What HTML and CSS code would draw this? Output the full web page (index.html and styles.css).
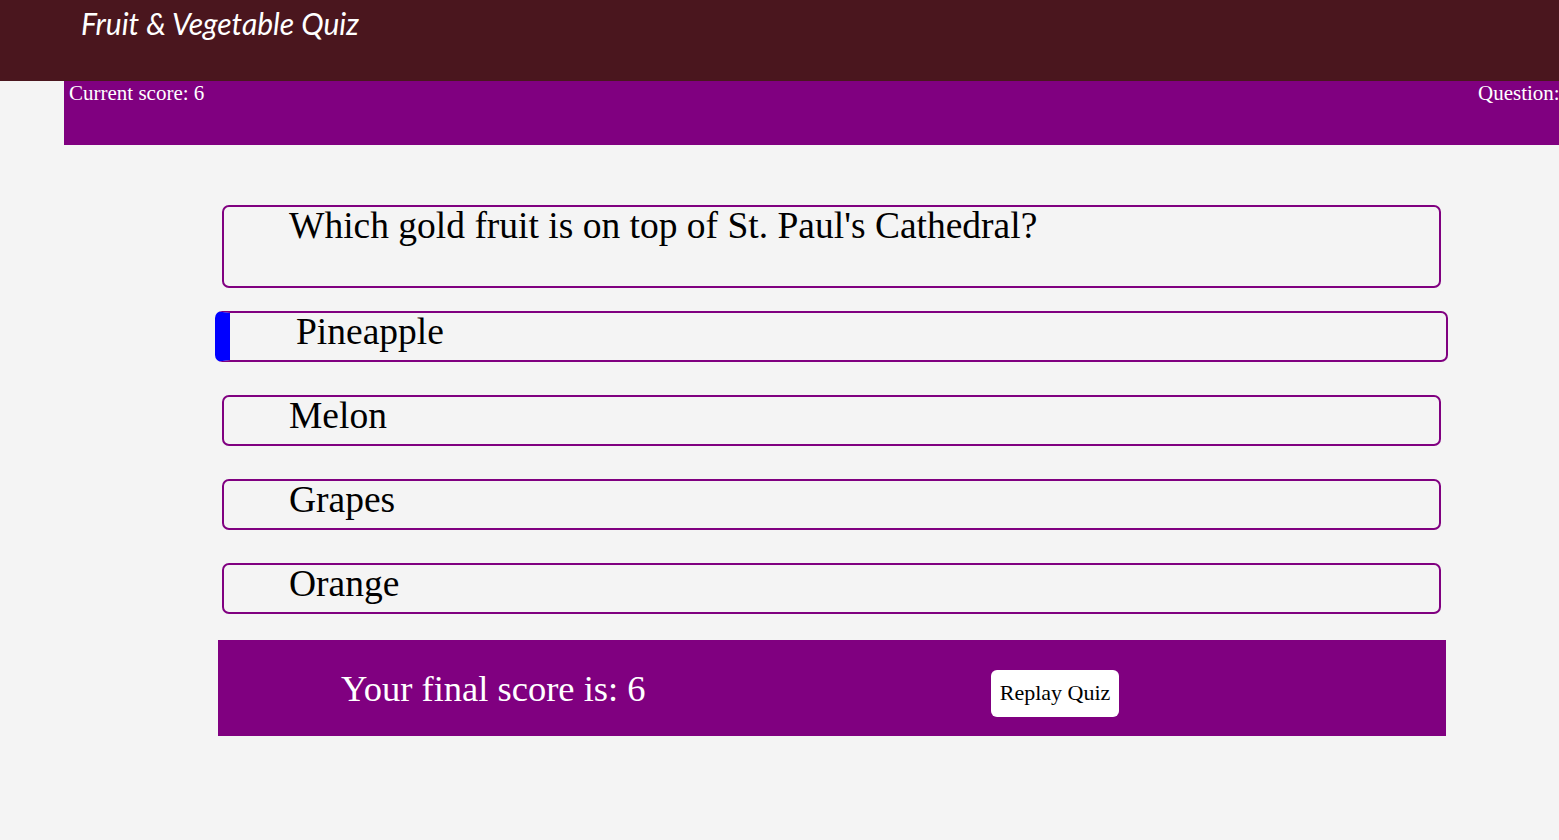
FILE: index.html
```html
<!DOCTYPE html>
<html lang="en">
<head>
<meta charset="utf-8">
<title>Fruit &amp; Vegetable Quiz</title>
<link rel="stylesheet" href="styles.css">
</head>
<body>
<header class="site-header">
  <h1 class="site-title">Fruit &amp; Vegetable Quiz</h1>
</header>
<div class="score-bar">
  <span class="score">Current score: 6</span>
  <span class="question-count">Question: 10/10</span>
</div>
<main class="quiz">
  <div class="question-box">Which gold fruit is on top of St. Paul's Cathedral?</div>
  <div class="answer selected">Pineapple</div>
  <div class="answer">Melon</div>
  <div class="answer">Grapes</div>
  <div class="answer">Orange</div>
  <section class="result">
    <p class="final-score">Your final score is: 6</p>
    <button class="replay">Replay Quiz</button>
  </section>
</main>
</body>
</html>
```
FILE: styles.css
```css
html, body {
  margin: 0;
  padding: 0;
}
body {
  background: #f4f4f4;
  overflow: hidden;
  width: 1559px;
  height: 840px;
  font-family: "Liberation Serif", "DejaVu Serif", serif;
}
.site-header {
  background: #4a161e;
  height: 81px;
  padding-left: 81px;
  box-sizing: border-box;
}
.site-title {
  margin: 0;
  padding-top: 4px;
  color: #ffffff;
  font-family: Lato, "DejaVu Sans", sans-serif;
  font-style: italic;
  font-weight: normal;
  font-size: 30px;
  line-height: 38px;
}
.score-bar {
  background: #800080;
  height: 64px;
  margin-left: 64px;
  width: 1560px;
  box-sizing: border-box;
  padding: 0 0 0 5px;
  display: flex;
  justify-content: space-between;
  color: #ffffff;
  font-family: "Liberation Serif", serif;
  font-size: 21px;
  line-height: 24px;
}
.question-count {
  width: 146px;
  white-space: nowrap;
}
.quiz {
  width: 1219px;
  margin: 60px 0 0 222px;
  display: flex;
  flex-direction: column;
}
.question-box {
  border: 2px solid #800080;
  border-radius: 7px;
  height: 83px;
  box-sizing: border-box;
  padding: 0 0 0 65px;
  font-size: 37.5px;
  line-height: 38px;
  color: #000;
}
.answer {
  margin-top: 23px;
  border: 2px solid #800080;
  border-radius: 7px;
  height: 51px;
  box-sizing: border-box;
  padding: 0 0 0 65px;
  font-size: 37.5px;
  line-height: 38px;
  color: #000;
}
.answer.selected {
  margin-left: -7px;
  margin-right: -7px;
  border-left: 15px solid #0000ff;
  padding-left: 66px;
}
.answer + .answer {
  margin-top: 33px;
}
.result {
  margin: 26px -5px 0 -4px;
  height: 96px;
  background: #800080;
  display: flex;
  align-items: center;
  padding-left: 123px;
  box-sizing: border-box;
}
.final-score {
  margin: 0;
  color: #ffffff;
  font-size: 36.5px;
  width: 650px;
}
.replay {
  background: #ffffff;
  border: none;
  border-radius: 6px;
  width: 128px;
  height: 47px;
  font-family: "Liberation Serif", serif;
  font-size: 22px;
  color: #000;
  padding: 0;
  margin-top: 10px;
}
```
